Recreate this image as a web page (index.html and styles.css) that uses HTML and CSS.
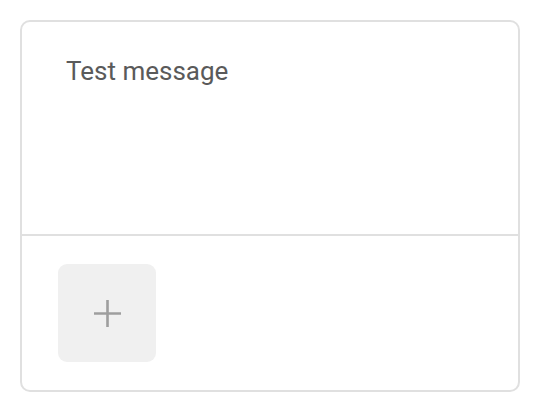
FILE: index.html
```
<!DOCTYPE html>
<html>
<head>
<meta charset="utf-8">
<link rel="stylesheet" href="styles.css">
</head>
<body>
<div class="card">
  <div class="message">Test message</div>
  <div class="footer">
    <button class="add" type="button" aria-label="Add">
      <svg width="27" height="27" viewBox="0 0 27 27"><path d="M13.5 0V27M0 13.5H27" stroke="#9e9e9e" stroke-width="2.6" stroke-linecap="round" fill="none"/></svg>
    </button>
  </div>
</div>
</body>
</html>
```
FILE: styles.css
```
html, body {
  margin: 0;
  padding: 0;
  background: #ffffff;
}
body {
  padding: 20px;
  font-family: Roboto, "Liberation Sans", sans-serif;
}
.card {
  width: 500px;
  height: 372px;
  box-sizing: border-box;
  border: 2px solid #e0e0e0;
  border-radius: 10px;
  display: flex;
  flex-direction: column;
}
.message {
  height: 214px;
  box-sizing: border-box;
  padding: 33px 0 0 44px;
  font-size: 26px;
  line-height: 32px;
  color: #5a5a5a;
  border-bottom: 2px solid #e0e0e0;
}
.footer {
  padding: 28px 0 0 36px;
}
.add {
  width: 98px;
  height: 98px;
  border: none;
  border-radius: 9px;
  background: #f0f0f0;
  display: flex;
  align-items: center;
  justify-content: center;
  padding: 0;
}
```
